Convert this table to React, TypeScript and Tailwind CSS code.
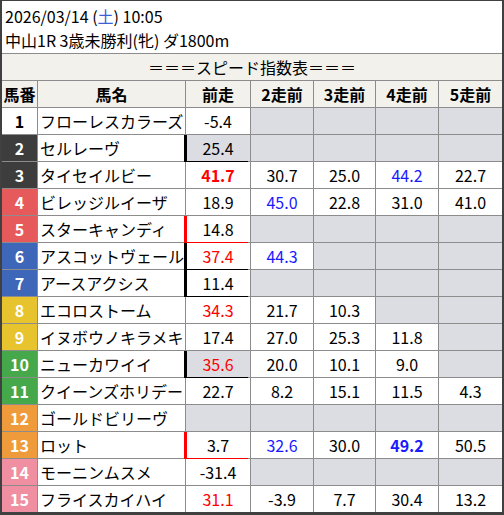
type Cell = { v: string; c?: 'red' | 'blue'; b?: boolean } | null;

type Row = {
  no: number;
  frame: string;
  name: string;
  last: Cell;
  lastGray?: boolean;
  mark?: 'black' | 'red';
  past: Cell[];
};

const frameCls: Record<string, string> = {
  w: 'bg-white text-black',
  k: 'bg-[#3d3d3d] text-white',
  r: 'bg-[#e75a5c] text-white',
  b: 'bg-[#3f67b9] text-white',
  y: 'bg-[#e7c42e] text-white',
  g: 'bg-[#45a84a] text-white',
  o: 'bg-[#ef9a3b] text-white',
  p: 'bg-[#ef8fa1] text-white',
};

const n = null;
const rows: Row[] = [
  { no: 1, frame: 'w', name: 'フローレスカラーズ', last: { v: '-5.4' }, past: [n, n, n, n] },
  { no: 2, frame: 'k', name: 'セルレーヴ', last: { v: '25.4' }, lastGray: true, mark: 'black', past: [n, n, n, n] },
  {
    no: 3,
    frame: 'k',
    name: 'タイセイルビー',
    last: { v: '41.7', c: 'red', b: true },
    past: [{ v: '30.7' }, { v: '25.0' }, { v: '44.2', c: 'blue' }, { v: '22.7' }],
  },
  {
    no: 4,
    frame: 'r',
    name: 'ビレッジルイーザ',
    last: { v: '18.9' },
    past: [{ v: '45.0', c: 'blue' }, { v: '22.8' }, { v: '31.0' }, { v: '41.0' }],
  },
  { no: 5, frame: 'r', name: 'スターキャンディ', last: { v: '14.8' }, mark: 'red', past: [n, n, n, n] },
  {
    no: 6,
    frame: 'b',
    name: 'アスコットヴェール',
    last: { v: '37.4', c: 'red' },
    mark: 'black',
    past: [{ v: '44.3', c: 'blue' }, n, n, n],
  },
  { no: 7, frame: 'b', name: 'アースアクシス', last: { v: '11.4' }, mark: 'black', past: [n, n, n, n] },
  { no: 8, frame: 'y', name: 'エコロストーム', last: { v: '34.3', c: 'red' }, past: [{ v: '21.7' }, { v: '10.3' }, n, n] },
  { no: 9, frame: 'y', name: 'イヌボウノキラメキ', last: { v: '17.4' }, past: [{ v: '27.0' }, { v: '25.3' }, { v: '11.8' }, n] },
  {
    no: 10,
    frame: 'g',
    name: 'ニューカワイイ',
    last: { v: '35.6', c: 'red' },
    lastGray: true,
    mark: 'black',
    past: [{ v: '20.0' }, { v: '10.1' }, { v: '9.0' }, n],
  },
  {
    no: 11,
    frame: 'g',
    name: 'クイーンズホリデー',
    last: { v: '22.7' },
    past: [{ v: '8.2' }, { v: '15.1' }, { v: '11.5' }, { v: '4.3' }],
  },
  { no: 12, frame: 'o', name: 'ゴールドビリーヴ', last: n, past: [n, n, n, n] },
  {
    no: 13,
    frame: 'o',
    name: 'ロット',
    last: { v: '3.7' },
    mark: 'red',
    past: [{ v: '32.6', c: 'blue' }, { v: '30.0' }, { v: '49.2', c: 'blue', b: true }, { v: '50.5' }],
  },
  { no: 14, frame: 'p', name: 'モーニンムスメ', last: { v: '-31.4' }, past: [n, n, n, n] },
  {
    no: 15,
    frame: 'p',
    name: 'フライスカイハイ',
    last: { v: '31.1', c: 'red' },
    past: [{ v: '-3.9' }, { v: '7.7' }, { v: '30.4' }, { v: '13.2' }],
  },
];

function ValueCell({ cell, gray, mark }: { cell: Cell; gray?: boolean; mark?: 'black' | 'red' }) {
  const bg = !cell || gray ? 'bg-[#dcdde2]' : 'bg-white';
  const color = cell?.c === 'red' ? 'text-[#ff0000]' : cell?.c === 'blue' ? 'text-[#1a1aff]' : 'text-black';
  const markCls =
    mark === 'black'
      ? 'shadow-[-2px_0_0_#000,-2px_1px_0_#000,inset_1px_0_0_#000]'
      : mark === 'red'
        ? 'shadow-[-2px_0_0_#ff0000,-2px_1px_0_#ff0000,inset_1px_0_0_#ff0000]'
        : '';
  return (
    <div className={`flex items-center justify-center ${bg} ${color} ${markCls} ${cell?.b ? 'font-bold' : ''}`}>
      {cell?.v ?? ''}
    </div>
  );
}

export default function App() {
  return (
    <div
      className="w-[504px] h-[515px] overflow-hidden border-x-2 border-t border-b-[3px] border-[#404040] bg-white text-[16px] leading-none text-black"
      style={{ fontFamily: '"Noto Sans CJK JP", "Noto Sans", sans-serif' }}
    >
      <div className="h-[52px] flex flex-col justify-center gap-[8px] pl-[3px] pt-[1px]">
        <div>
          2026/03/14 (<span className="text-[#3b5fd6]">土</span>) 10:05
        </div>
        <div>中山1R 3歳未勝利(牝) ダ1800m</div>
      </div>
      <div className="grid grid-cols-[35px_147px_64px_62px_61px_62px_63px] auto-rows-[26px] gap-px bg-[#8c8c8c] pt-px">
        <div className="col-span-7 flex items-center justify-center bg-[#f2f1ec]">＝＝＝スピード指数表＝＝＝</div>
        {['馬番', '馬名', '前走', '2走前', '3走前', '4走前', '5走前'].map((h) => (
          <div key={h} className="flex items-center justify-center bg-[#f2f1ec] font-bold">
            {h}
          </div>
        ))}
        {rows.map((r) => (
          <Row key={r.no} r={r} />
        ))}
      </div>
    </div>
  );
}

function Row({ r }: { r: Row }) {
  return (
    <>
      <div className={`flex items-center justify-center font-bold ${frameCls[r.frame]}`}>{r.no}</div>
      <div className="flex items-center bg-white pl-[2px] whitespace-nowrap">{r.name}</div>
      <ValueCell cell={r.last} gray={r.lastGray} mark={r.mark} />
      {r.past.map((c, i) => (
        <ValueCell key={i} cell={c} />
      ))}
    </>
  );
}
